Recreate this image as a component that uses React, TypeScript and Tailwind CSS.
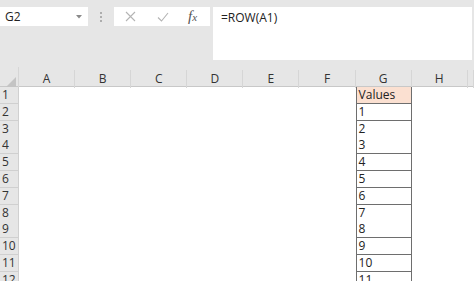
import React from 'react';

const cols = ['A', 'B', 'C', 'D', 'E', 'F', 'G', 'H', ''];
const rows = Array.from({ length: 12 }, (_, i) => i + 1);

const font = "font-['Open_Sans','Liberation_Sans',sans-serif]";

function gValue(r: number) {
  if (r === 1) return 'Values';
  return String(r - 1);
}

export default function App() {
  return (
    <div className={`w-[474px] h-[281px] overflow-hidden bg-[#e6e6e6] text-[#222] ${font}`}>
      {/* Formula bar area */}
      <div className="h-[67px] pt-[7px] flex items-start">
        <div className="w-[88px] h-[19px] bg-white flex items-center justify-between pl-[5px] pr-[6px] text-[12px]">
          <span>G2</span>
          <svg width="6" height="4" viewBox="0 0 6 4">
            <path d="M0 0 L6 0 L3 3.5 Z" fill="#8a8a8a" />
          </svg>
        </div>
        <div className="w-[26px] h-[19px] flex flex-col items-center justify-center gap-[2px]">
          <span className="w-[2px] h-[2px] bg-[#9a9a9a] rounded-full" />
          <span className="w-[2px] h-[2px] bg-[#9a9a9a] rounded-full" />
          <span className="w-[2px] h-[2px] bg-[#9a9a9a] rounded-full" />
        </div>
        <div className="w-[96px] h-[19px] bg-white flex items-center">
          <svg className="ml-[11px]" width="11" height="11" viewBox="0 0 11 11">
            <path d="M1 1 L10 10 M10 1 L1 10" stroke="#b4b4b4" strokeWidth="1.1" fill="none" />
          </svg>
          <svg className="ml-[21px]" width="12" height="10" viewBox="0 0 12 10">
            <path d="M1 5.5 L4.5 9 L11 1" stroke="#b4b4b4" strokeWidth="1.1" fill="none" />
          </svg>
          <span className="ml-[19px] text-[15px] italic font-['Liberation_Serif',serif] text-[#555] leading-none">
            f<span className="text-[11px]">x</span>
          </span>
        </div>
        <div className="ml-[3px] w-[259px] h-[53px] bg-white pl-[8px] pt-[2px] text-[12px]">
          =ROW(A1)
        </div>
      </div>

      {/* Column headers */}
      <div className="grid grid-cols-[19px_repeat(8,56.1px)_1fr] h-[20px] border-b border-[#c8c8c8]">
        <div className="border-r border-[#d6d6d6] flex items-end justify-end pb-[3px] pr-[2px]">
          <svg width="11" height="11" viewBox="0 0 11 11">
            <path d="M11 0 L11 11 L0 11 Z" fill="#c4c4c4" />
          </svg>
        </div>
        {cols.map((c, i) => (
          <div
            key={i}
            className="border-r border-[#d6d6d6] my-[3px] flex items-center justify-center text-[12px] text-[#333]"
          >
            {c}
          </div>
        ))}
      </div>

      {/* Rows */}
      <div className="bg-white">
        {rows.map((r) => (
          <div key={r} className="grid grid-cols-[19px_repeat(8,56.1px)_1fr] h-[16.8px]">
            <div className="bg-[#e6e6e6] border-r border-b border-[#d0d0d0] pl-[2px] text-[12px] leading-[16px] text-[#333]">
              {r}
            </div>
            <div />
            <div />
            <div />
            <div />
            <div />
            <div />
            <div
              className={`border-l border-r border-b border-[#6e6e6e] pl-[2px] text-[12px] leading-[15px] text-[#222] ${
                r === 1 ? 'bg-[#fbe0d1]' : 'bg-white'
              }`}
            >
              {gValue(r)}
            </div>
            <div />
            <div />
          </div>
        ))}
      </div>
    </div>
  );
}
